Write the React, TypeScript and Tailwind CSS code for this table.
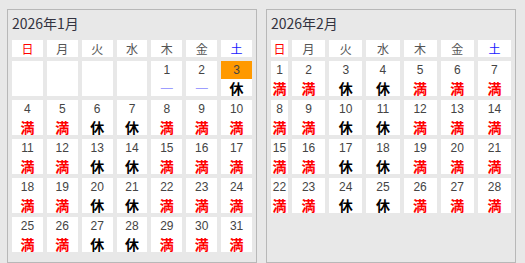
import React from "react";

type Cell = { d?: number; m?: "満" | "休" | "—"; hl?: boolean };

const weekdays = ["日", "月", "火", "水", "木", "金", "土"];

function mark(dow: number): "満" | "休" {
  return dow === 2 || dow === 3 ? "休" : "満";
}

function buildJan(): Cell[] {
  const cells: Cell[] = [{}, {}, {}, {}];
  cells.push({ d: 1, m: "—" });
  cells.push({ d: 2, m: "—" });
  cells.push({ d: 3, m: "休", hl: true });
  for (let d = 4; d <= 31; d++) {
    const dow = (d + 3) % 7;
    cells.push({ d, m: mark(dow) });
  }
  return cells;
}

function buildFeb(): Cell[] {
  const cells: Cell[] = [];
  for (let d = 1; d <= 28; d++) {
    const dow = (d - 1) % 7;
    cells.push({ d, m: mark(dow) });
  }
  return cells;
}

function DateCell({ c }: { c: Cell }) {
  if (c.d === undefined) return <div className="bg-white h-[35px]" />;
  return (
    <div className="bg-white h-[35px] flex flex-col">
      <div
        className={
          "h-[18px] flex items-center justify-center text-[12px] text-[#444] font-['Liberation_Sans',sans-serif] " +
          (c.hl ? "bg-[#ff9900]" : "")
        }
      >
        {c.d}
      </div>
      {c.m === "—" ? (
        <div className="h-[17px] flex items-center justify-center text-[12px] leading-none text-[#9d9dff] font-['Liberation_Sans',sans-serif]">
          —
        </div>
      ) : (
        <div
          className={
            "h-[17px] flex items-center justify-center text-[14px] leading-none font-bold font-['Noto_Sans_CJK_JP',sans-serif] " +
            (c.m === "満" ? "text-[#ff0000]" : "text-black")
          }
        >
          {c.m}
        </div>
      )}
    </div>
  );
}

function Month({ title, cells, cols }: { title: string; cells: Cell[]; cols: string }) {
  return (
    <div className="w-[250px] border border-[#b8b8b8] px-[4px] pb-[4px] self-stretch">
      <div className="h-[26px] flex items-center text-[14px] text-[#333340] font-['Noto_Sans_CJK_JP',sans-serif]">
        {title}
      </div>
      <div className={"mt-[4px] grid gap-[4px] " + cols}>
        {weekdays.map((w, i) => (
          <div
            key={w}
            className={
              "bg-white h-[17px] flex items-center justify-center text-[12px] leading-none font-['Noto_Sans_CJK_JP',sans-serif] " +
              (i === 0 ? "text-[#ff0000]" : i === 6 ? "text-[#2020ff]" : "text-[#555]")
            }
          >
            {w}
          </div>
        ))}
        {cells.map((c, i) => (
          <DateCell key={i} c={c} />
        ))}
      </div>
    </div>
  );
}

export default function App() {
  return (
    <div className="w-[525px] h-[263px] bg-[#e8e8e8] flex items-start pt-[9px] pl-[7px] gap-[9px] overflow-hidden">
      <Month title="2026年1月" cells={buildJan()} cols="grid-cols-7" />
      <Month
        title="2026年2月"
        cells={buildFeb()}
        cols="grid-cols-[17px_repeat(6,minmax(0,1fr))]"
      />
    </div>
  );
}
